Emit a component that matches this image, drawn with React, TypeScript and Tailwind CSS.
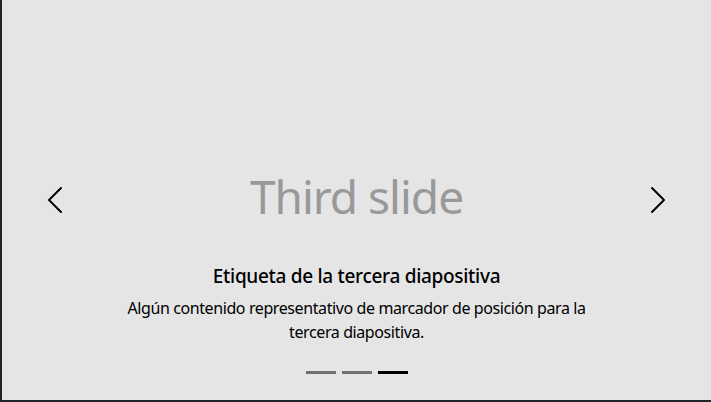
import React from "react";

const slides = ["First slide", "Second slide", "Third slide"];

const Chevron: React.FC<{ dir: "prev" | "next" }> = ({ dir }) => (
  <svg viewBox="0 0 16 16" className="w-8 h-8" fill="#000">
    {dir === "prev" ? (
      <path d="M11.354 1.646a.5.5 0 0 1 0 .708L5.707 8l5.647 5.646a.5.5 0 0 1-.708.708l-6-6a.5.5 0 0 1 0-.708l6-6a.5.5 0 0 1 .708 0z" />
    ) : (
      <path d="M4.646 1.646a.5.5 0 0 1 .708 0l6 6a.5.5 0 0 1 0 .708l-6 6a.5.5 0 0 1-.708-.708L10.293 8 4.646 2.354a.5.5 0 0 1 0-.708z" />
    )}
  </svg>
);

export default function App() {
  const active = 2;

  return (
    <div
      className="relative w-full h-[402px] overflow-hidden bg-[#e5e5e5] border-l-2 border-b-2 border-[#212529]"
      style={{ fontFamily: '"Noto Sans", "Open Sans", sans-serif' }}
    >
      {/* slide */}
      <div className="h-full flex items-center justify-center">
        <span className="text-[46px] leading-none tracking-[-1px] text-[#999] -mt-[8px]">
          {slides[active]}
        </span>
      </div>

      {/* controls */}
      <button className="absolute top-0 bottom-0 left-0 w-[15%] flex items-center justify-center">
        <Chevron dir="prev" />
      </button>
      <button className="absolute top-0 bottom-0 right-0 w-[15%] flex items-center justify-center">
        <Chevron dir="next" />
      </button>

      {/* caption */}
      <div className="absolute left-[15%] right-[15%] bottom-5 py-5 text-center text-black">
        <h5 className="text-[19px] leading-[24px] tracking-[-0.3px] font-medium mb-2">
          Etiqueta de la tercera diapositiva
        </h5>
        <p className="text-[16px] leading-[24px] tracking-[-0.4px] mb-4">
          Algún contenido representativo de marcador de posición para la tercera diapositiva.
        </p>
      </div>

      {/* indicators */}
      <div className="absolute left-0 right-0 bottom-0 mb-4 flex justify-center">
        {slides.map((s, i) => (
          <button
            key={s}
            aria-label={s}
            className={
              "w-[30px] h-[23px] mx-[3px] border-y-[10px] border-transparent bg-clip-padding bg-black " +
              (i === active ? "opacity-100" : "opacity-50")
            }
          />
        ))}
      </div>
    </div>
  );
}
